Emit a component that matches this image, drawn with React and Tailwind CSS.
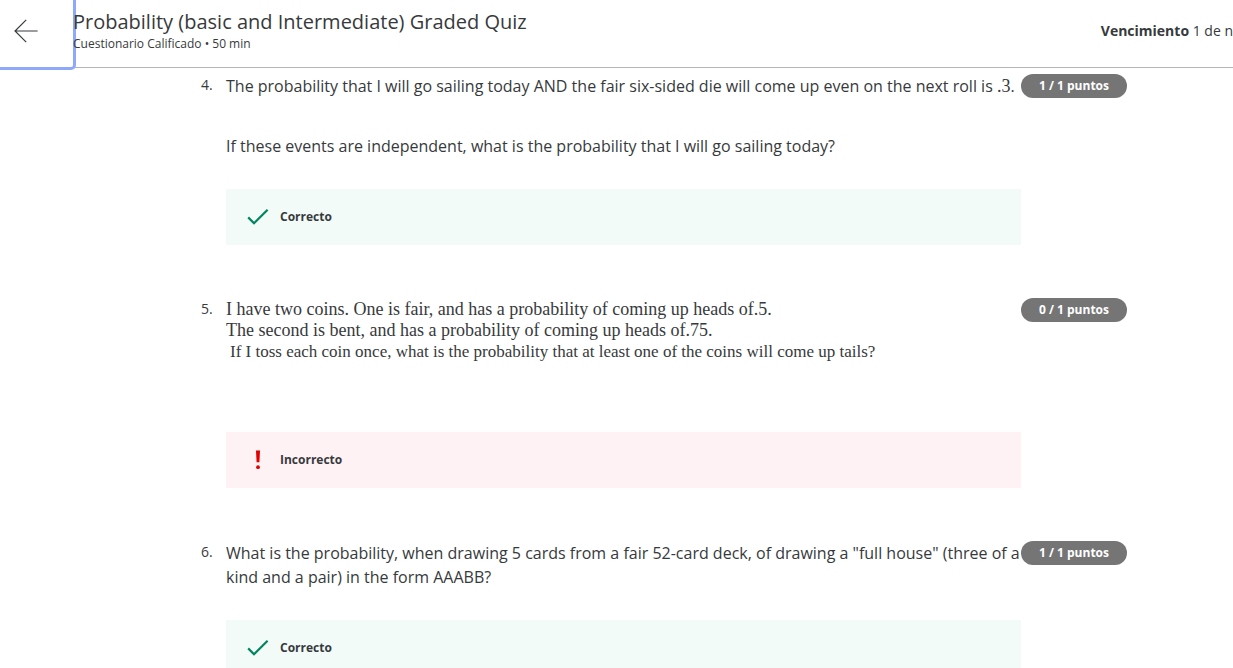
import React from "react";

function CheckIcon() {
  return (
    <svg width="24" height="24" viewBox="0 0 24 24" fill="none" stroke="#00855f" strokeWidth="2.2" aria-hidden="true">
      <path d="M2.2 12.4 L8 18.2 L21.6 4.8" />
    </svg>
  );
}

function AlertIcon() {
  return (
    <svg width="24" height="24" viewBox="0 0 24 24" fill="#e00000" aria-hidden="true">
      <path d="M10 2.4 H14 L13.4 14.2 H10.6 Z" />
      <circle cx="12" cy="19.2" r="1.9" />
    </svg>
  );
}

function Feedback({ correct }) {
  return (
    <div className={`flex h-14 items-center gap-2.5 pl-5 ${correct ? "bg-[#f2fbf8]" : "bg-[#fff2f5]"}`}>
      {correct ? <CheckIcon /> : <AlertIcon />}
      <span className="text-xs font-bold">{correct ? "Correcto" : "Incorrecto"}</span>
    </div>
  );
}

function Question({ number, score, correct, children }) {
  return (
    <li className="grid grid-cols-[25px_minmax(0,1fr)_106px]">
      <span className="text-sm leading-[22px]">{number}.</span>
      <div>
        {children}
        <Feedback correct={correct} />
      </div>
      <span className="flex h-6 items-center justify-center rounded-full bg-[#757575] text-xs font-bold text-white">
        {score} puntos
      </span>
    </li>
  );
}

export default function App() {
  return (
    <div className="h-screen overflow-hidden bg-white font-['Open_Sans',sans-serif] text-[#373a3c]">
      <header className="flex h-[68px] border-b border-[#b5b5b5]">
        <button
          type="button"
          aria-label="Volver"
          className="flex w-[73px] shrink-0 items-center rounded-br-xs pb-1.5 pl-3.5 ring-3 ring-[#8ea8fb]"
        >
          <svg width="24" height="24" viewBox="0 0 24 24" fill="none" stroke="#373a3c" strokeWidth="1.2" aria-hidden="true">
            <path d="M23.6 12 H1 M12.2 0.8 L1 12 L12.2 23.2" />
          </svg>
        </button>
        <div className="relative grow pt-2">
          <h1 className="text-xl leading-7">Probability (basic and Intermediate) Graded Quiz</h1>
          <p className="text-xs">Cuestionario Calificado • 50 min</p>
        </div>
        <p className="pt-5 text-sm leading-[22px] whitespace-nowrap">
          <strong>Vencimiento</strong> 1 de n
        </p>
      </header>
      <main className="pt-1.5 pr-[106px] pl-[201px]">
        <ol className="flex flex-col gap-[53px]">
          <Question number={4} score="1 / 1" correct>
            <div className="pb-[31px] leading-6">
              <p className="whitespace-nowrap">
                The probability that I will go sailing today AND the fair six-sided die will come up even on the next roll is{" "}
                <span className="font-['Liberation_Serif',serif] text-lg leading-5">.3</span>.
              </p>
              <p className="pt-9">If these events are independent, what is the probability that I will go sailing today?</p>
            </div>
          </Question>
          <Question number={5} score="0 / 1">
            <div className="pt-px pb-[70px] font-['Liberation_Serif',serif] text-lg leading-[21px]">
              <p>I have two coins. One is fair, and has a probability of coming up heads of.5.</p>
              <p>The second is bent, and has a probability of coming up heads of.75.</p>
              <p className="pl-1 text-[17px]">
                If I toss each coin once, what is the probability that at least one of the coins will come up tails?
              </p>
            </div>
          </Question>
          <Question number={6} score="1 / 1" correct>
            <p className="pb-[31px] leading-6">
              What is the probability, when drawing 5 cards from a fair 52-card deck, of drawing a "full house" (three of a
              kind and a pair) in the form AAABB?
            </p>
          </Question>
        </ol>
      </main>
    </div>
  );
}
